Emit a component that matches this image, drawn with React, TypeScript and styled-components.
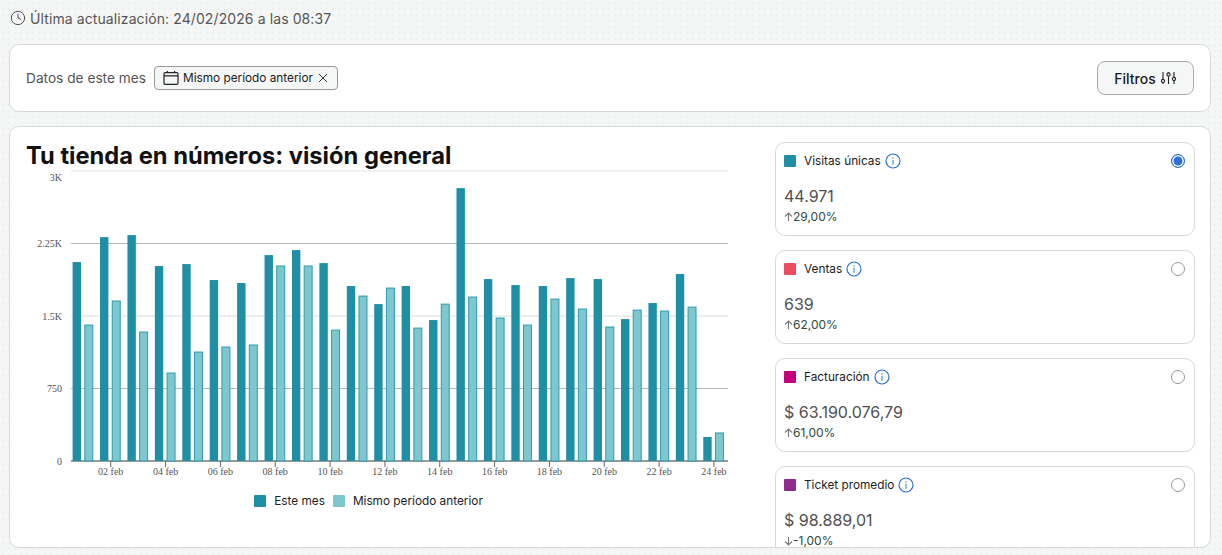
import React from "react";
import styled, { createGlobalStyle } from "styled-components";
import { Clock } from "lucide-react";

const Global = createGlobalStyle`
  html, body { margin: 0; padding: 0; height: 555px; overflow: hidden; }
  body {
    background-color: #f5f7f6;
    background-image: radial-gradient(#eef0ef 0.7px, transparent 0.9px);
    background-size: 6px 6px;
    font-family: Inter, "Liberation Sans", sans-serif;
    color: #1c1c1c;
  }
`;

const Page = styled.div`
  display: flex;
  flex-direction: column;
  height: 555px;
  padding: 0 11px 0 9px;
  box-sizing: border-box;
`;

const UpdatedRow = styled.div`
  display: flex;
  align-items: center;
  gap: 4px;
  height: 36px;
  margin-bottom: 8px;
  padding-left: 1px;
  font-size: 14px;
  letter-spacing: 0.1px;
  color: #555;
  svg { color: #444; }
`;

const Card = styled.section`
  background: #fff;
  border: 1px solid #d8d9d9;
  border-radius: 10px;
  box-sizing: border-box;
`;

const FilterBar = styled(Card)`
  display: flex;
  align-items: center;
  justify-content: space-between;
  height: 68px;
  padding: 0 16px;
  margin-bottom: 14px;
`;

const FilterLeft = styled.div`
  display: flex;
  align-items: center;
  gap: 8px;
`;

const FilterLabel = styled.span`
  font-size: 13.7px;
  color: #555;
`;

const Chip = styled.div`
  display: flex;
  align-items: center;
  gap: 4px;
  height: 24px;
  padding: 0 9px 0 8px;
  box-sizing: border-box;
  background: #f5f7f6;
  border: 1px solid #999;
  border-radius: 4px;
  font-size: 11.8px;
  color: #1c1c1c;
`;

const ChipClose = styled.svg`
  margin-left: 1px;
`;

const FilterButton = styled.button`
  display: flex;
  align-items: center;
  justify-content: center;
  gap: 4px;
  width: 97px;
  height: 34px;
  background: #f5f7f6;
  border: 1px solid #aaa;
  border-radius: 8px;
  font: 500 14px Inter, sans-serif;
  color: #1c1c1c;
`;

const Overview = styled(Card)`
  display: flex;
  justify-content: space-between;
  height: 422px;
  padding: 14px 15px 0 16px;
  overflow: hidden;
`;

const ChartColumn = styled.div`
  display: flex;
  flex-direction: column;
  width: 720px;
`;

const Title = styled.h1`
  margin: 0;
  height: 28px;
  font-size: 23.7px;
  line-height: 29px;
  font-weight: 700;
  color: #111;
  white-space: nowrap;
`;

const ChartSvg = styled.svg`
  display: block;
  margin-left: -16px;
  flex: none;
`;

const AxisText = styled.text`
  font-family: "Liberation Serif", serif;
  font-size: 10px;
  fill: #555;
`;

const Legend = styled.div`
  display: flex;
  justify-content: center;
  align-items: center;
  margin-top: 8px;
  padding-right: 35px;
  font-size: 11.8px;
  color: #222;
`;

const LegendSwatch = styled.span<{ $color: string }>`
  width: 12px;
  height: 12px;
  border-radius: 1px;
  margin-right: 8px;
  background: ${(p) => p.$color};
`;

const LegendLabel = styled.span`
  margin-right: 8px;
`;

const MetricList = styled.div`
  display: flex;
  flex-direction: column;
  gap: 14px;
  width: 420px;
  flex: none;
  padding-top: 1px;
`;

const Metric = styled.div`
  height: 94px;
  flex: none;
  padding: 10px 9px 0 8px;
  box-sizing: border-box;
  border: 1px solid #d8d9d9;
  border-radius: 10px;
  background: #fff;
`;

const MetricHead = styled.div`
  display: flex;
  align-items: center;
  height: 16px;
`;

const Swatch = styled.span<{ $color: string }>`
  width: 12px;
  height: 12px;
  border-radius: 1px;
  margin-right: 8px;
  background: ${(p) => p.$color};
`;

const MetricName = styled.span`
  font-size: 11.8px;
  color: #1c1c1c;
  margin-right: 4px;
`;

const Radio = styled.span<{ $on?: boolean }>`
  width: 14px;
  height: 14px;
  margin-left: auto;
  box-sizing: border-box;
  border-radius: 50%;
  border: 1px solid ${(p) => (p.$on ? "#2a6fdb" : "#999")};
  background: ${(p) => (p.$on ? "#2a6fdb" : "#fff")};
  box-shadow: ${(p) => (p.$on ? "inset 0 0 0 1.5px #fff" : "none")};
`;

const MetricValue = styled.div`
  margin-top: 17px;
  font-size: 16px;
  line-height: 20px;
  color: #505050;
`;

const MetricDelta = styled.div`
  display: flex;
  align-items: center;
  margin-top: 3px;
  font-size: 12px;
  line-height: 16px;
  color: #2e4a40;
  svg { color: #777; }
`;

const data: [number, number][] = [
  [2058, 1406], [2316, 1655], [2337, 1334], [2017, 910], [2037, 1127], [1872, 1179],
  [1841, 1200], [2130, 2017], [2182, 2017], [2047, 1354], [1810, 1706], [1623, 1789],
  [1810, 1375], [1458, 1623], [2823, 1696], [1882, 1479], [1820, 1406], [1810, 1675],
  [1892, 1572], [1882, 1386], [1468, 1561], [1634, 1551], [1934, 1592], [248, 290],
];

const TOP = 2;
const BASE = 292;
const yOf = (v: number) => BASE - (v / 3000) * (BASE - TOP);
const xOf = (day: number) => 73.3 + (day - 1) * 27.42;

const grid = [
  { v: 3000, label: "3K", color: "#e0e6e6", dy: 9.5 },
  { v: 2250, label: "2.25K", color: "#b9b9b9", dy: 3.5 },
  { v: 1500, label: "1.5K", color: "#dcdcdc", dy: 3.5 },
  { v: 750, label: "750", color: "#b9b9b9", dy: 3.5 },
  { v: 0, label: "0", color: "#999", dy: 3.5 },
];

function Chart() {
  return (
    <ChartSvg width={736} height={317} viewBox="0 0 736 317">
      {grid.map((g) => (
        <g key={g.v}>
          <line
            x1={61}
            x2={718}
            y1={yOf(g.v)}
            y2={yOf(g.v)}
            stroke={g.color}
            strokeWidth={g.v === 0 ? 2 : 1}
          />
          <AxisText x={52} y={yOf(g.v) + g.dy} textAnchor="end">
            {g.label}
          </AxisText>
        </g>
      ))}
      {data.map(([a, b], i) => {
        const c = xOf(i + 1);
        return (
          <g key={i}>
            <rect x={c - 10.7} y={yOf(a)} width={8.4} height={BASE - yOf(a)} fill="#1f8fa6" />
            <rect
              x={c + 1.5}
              y={yOf(b)}
              width={8}
              height={BASE - yOf(b)}
              fill="#7fc7cf"
              stroke="#2f9bae"
              strokeWidth={1}
            />
          </g>
        );
      })}
      {data.map((_, i) =>
        i % 2 === 1 ? (
          <g key={i}>
            <line x1={xOf(i + 1)} x2={xOf(i + 1)} y1={BASE} y2={BASE + 6} stroke="#666" />
            <AxisText x={xOf(i + 1)} y={BASE + 14} textAnchor="middle">
              {String(i + 1).padStart(2, "0")} feb
            </AxisText>
          </g>
        ) : null
      )}
    </ChartSvg>
  );
}

function InfoIcon() {
  return (
    <svg width="16" height="16" viewBox="0 0 16 16">
      <circle cx="8" cy="8" r="7" fill="none" stroke="#2a6fdb" strokeWidth="1.2" />
      <rect x="7.3" y="6.8" width="1.4" height="5" fill="#62a9c9" />
      <rect x="7.3" y="4.2" width="1.4" height="1.4" fill="#62a9c9" />
    </svg>
  );
}

function CalendarIcon() {
  return (
    <svg width="16" height="16" viewBox="0 0 16 16" fill="none" stroke="#222" strokeWidth="1.2">
      <rect x="1" y="2.6" width="14" height="11.8" rx="1.4" />
      <path d="M1 5.8h14M4.4 1v1.6M11.6 1v1.6" />
    </svg>
  );
}

function CloseIcon() {
  return (
    <ChipClose width="10" height="10" viewBox="0 0 10 10" fill="none" stroke="#333" strokeWidth="1">
      <path d="M1 1l8 8M9 1l-8 8" />
    </ChipClose>
  );
}

function SlidersIcon() {
  return (
    <svg width="17" height="16" viewBox="0 0 17 16" fill="none" stroke="#222" strokeWidth="1.1">
      <path d="M3 2v7.4M3 12.6V14M8.5 2v.8M8.5 6.2V14M14 2v5.4M14 10.6V14" />
      <circle cx="3" cy="11" r="1.6" />
      <circle cx="8.5" cy="4.5" r="1.6" />
      <circle cx="14" cy="9" r="1.6" />
    </svg>
  );
}

function ArrowIcon({ down }: { down?: boolean }) {
  return (
    <svg width="9" height="10" viewBox="0 0 9 10" fill="none" stroke="currentColor" strokeWidth="1.1">
      {down ? <path d="M4.5 1v8M1 5.5 4.5 9 8 5.5" /> : <path d="M4.5 9V1M1 4.5 4.5 1 8 4.5" />}
    </svg>
  );
}

const metrics = [
  { name: "Visitas únicas", color: "#1f8fa6", value: "44.971", delta: "29,00%", on: true },
  { name: "Ventas", color: "#ea4d60", value: "639", delta: "62,00%" },
  { name: "Facturación", color: "#c2007b", value: "$ 63.190.076,79", delta: "61,00%" },
  { name: "Ticket promedio", color: "#8e2c8e", value: "$ 98.889,01", delta: "-1,00%", down: true },
];

export default function App() {
  return (
    <>
      <Global />
      <Page>
        <UpdatedRow>
          <Clock size={16} strokeWidth={1.4} />
          Última actualización: 24/02/2026 a las 08:37
        </UpdatedRow>
        <FilterBar>
          <FilterLeft>
            <FilterLabel>Datos de este mes</FilterLabel>
            <Chip>
              <CalendarIcon />
              Mismo período anterior
              <CloseIcon />
            </Chip>
          </FilterLeft>
          <FilterButton>
            Filtros
            <SlidersIcon />
          </FilterButton>
        </FilterBar>
        <Overview>
          <ChartColumn>
            <Title>Tu tienda en números: visión general</Title>
            <Chart />
            <Legend>
              <LegendSwatch $color="#1f8fa6" />
              <LegendLabel>Este mes</LegendLabel>
              <LegendSwatch $color="#7fc7cf" />
              <span>Mismo período anterior</span>
            </Legend>
          </ChartColumn>
          <MetricList>
            {metrics.map((m) => (
              <Metric key={m.name}>
                <MetricHead>
                  <Swatch $color={m.color} />
                  <MetricName>{m.name}</MetricName>
                  <InfoIcon />
                  <Radio $on={m.on} />
                </MetricHead>
                <MetricValue>{m.value}</MetricValue>
                <MetricDelta>
                  <ArrowIcon down={m.down} />
                  {m.delta}
                </MetricDelta>
              </Metric>
            ))}
          </MetricList>
        </Overview>
      </Page>
    </>
  );
}
